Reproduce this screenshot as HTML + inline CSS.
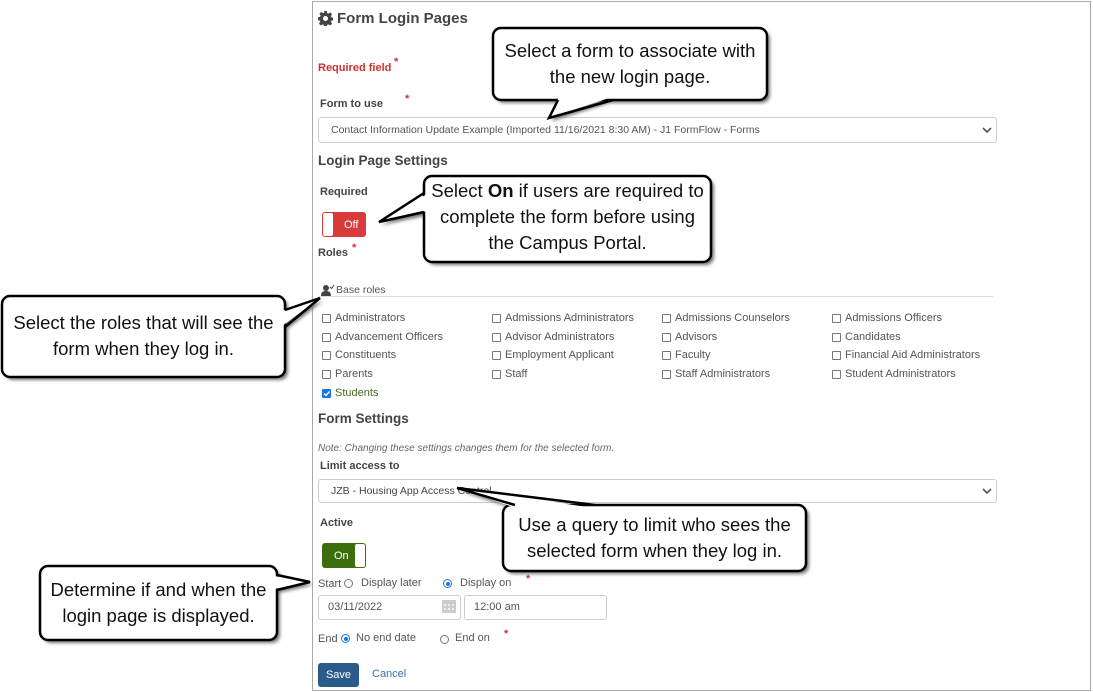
<!DOCTYPE html>
<html><head><meta charset="utf-8"><style>
*{margin:0;padding:0;box-sizing:border-box}
body{width:1093px;height:692px;background:#fff;position:relative;overflow:hidden;font-family:"Liberation Sans",sans-serif;color:#555}
.a{position:absolute;white-space:nowrap}
.lb{font-size:11px;font-weight:bold;color:#444}
.h{font-size:13.5px;font-weight:bold;color:#444}
.t{font-size:11px;color:#555}
.red{color:#d0312d}
.ast{color:#d0312d;font-size:11px;font-weight:bold}
.sel{position:absolute;border:1px solid #ccc;border-radius:3px;background:#fff}
.cb{position:absolute;width:9px;height:9px;border:1px solid #777;border-radius:1px;background:#fff}
.rd{position:absolute;width:9px;height:9px;border:1px solid #777;border-radius:50%;background:#fff}
.rd.on{border:1px solid #1a73e8}
.rd.on:after{content:"";position:absolute;left:1.5px;top:1.5px;width:4px;height:4px;border-radius:50%;background:#1a73e8}
.ct{position:absolute;font-size:18.5px;color:#111;text-align:center;line-height:26px}
</style></head><body>
<div class="a" style="left:312px;top:1px;width:779px;height:690px;border:1px solid #aaa"></div>

<svg class="a" style="left:318px;top:11px" width="15" height="15" viewBox="0 0 16 16"><path fill="#444" d="M6.6 0h2.8l.4 2.2 1.3.6 1.9-1.3 2 2-1.3 1.9.6 1.3 2.2.4v2.8l-2.2.4-.6 1.3 1.3 1.9-2 2-1.9-1.3-1.3.6-.4 2.2H6.6l-.4-2.2-1.3-.6-1.9 1.3-2-2 1.3-1.9-.6-1.3L0 9.4V6.6l2.2-.4.6-1.3L1.5 3l2-2 1.9 1.3 1.3-.6zM8 5.3a2.7 2.7 0 100 5.4 2.7 2.7 0 000-5.4z"/></svg>
<div class="a" style="left:337px;top:10px;font-size:15px;font-weight:bold;color:#444">Form Login Pages</div>

<div class="a lb red" style="left:318px;top:62px">Required field</div><div class="a ast" style="left:394px;top:56px">*</div>
<div class="a lb" style="left:320px;top:98px">Form to use</div><div class="a ast" style="left:405px;top:93px">*</div>
<div class="sel" style="left:318px;top:117px;width:679px;height:26px"></div>
<div class="a t" style="left:331px;top:124px;font-size:10.5px">Contact Information Update Example (Imported 11/16/2021 8:30 AM) - J1 FormFlow - Forms</div>
<svg class="a" style="left:982px;top:125px" width="10" height="10"><path d="M1 3l4 4 4-4" stroke="#555" stroke-width="1.6" fill="none"/></svg>

<div class="a h" style="left:318px;top:153px">Login Page Settings</div>
<div class="a lb" style="left:320px;top:186px">Required</div>
<div class="a" style="left:322px;top:212px;width:44px;height:25px;background:#d83b3b;border-radius:3px"></div>
<div class="a" style="left:323px;top:213px;width:10px;height:23px;background:#fff;border-radius:2px"></div>
<div class="a" style="left:344px;top:219px;font-size:11px;color:#fff">Off</div>
<div class="a lb" style="left:318px;top:247px">Roles</div><div class="a ast" style="left:352px;top:242px">*</div>

<svg class="a" style="left:321px;top:284px" width="14" height="12"><circle cx="5" cy="4" r="3" fill="#444"/><path d="M0 12c0-4 2-5 5-5s5 1 5 5z" fill="#444"/><path d="M9 3l1.5 1.5L13 1" stroke="#444" fill="none"/></svg>
<div class="a t" style="left:336px;top:284px;font-size:10.5px">Base roles</div>
<div class="a" style="left:318px;top:296px;width:675px;height:1px;background:#ddd"></div>

<div class="cb" style="left:322px;top:314px"></div><div class="a t" style="left:335px;top:312px">Administrators</div>
<div class="cb" style="left:492px;top:314px"></div><div class="a t" style="left:505px;top:312px">Admissions Administrators</div>
<div class="cb" style="left:662px;top:314px"></div><div class="a t" style="left:675px;top:312px">Admissions Counselors</div>
<div class="cb" style="left:832px;top:314px"></div><div class="a t" style="left:845px;top:312px">Admissions Officers</div>
<div class="cb" style="left:322px;top:333px"></div><div class="a t" style="left:335px;top:331px">Advancement Officers</div>
<div class="cb" style="left:492px;top:333px"></div><div class="a t" style="left:505px;top:331px">Advisor Administrators</div>
<div class="cb" style="left:662px;top:333px"></div><div class="a t" style="left:675px;top:331px">Advisors</div>
<div class="cb" style="left:832px;top:333px"></div><div class="a t" style="left:845px;top:331px">Candidates</div>
<div class="cb" style="left:322px;top:351px"></div><div class="a t" style="left:335px;top:349px">Constituents</div>
<div class="cb" style="left:492px;top:351px"></div><div class="a t" style="left:505px;top:349px">Employment Applicant</div>
<div class="cb" style="left:662px;top:351px"></div><div class="a t" style="left:675px;top:349px">Faculty</div>
<div class="cb" style="left:832px;top:351px"></div><div class="a t" style="left:845px;top:349px">Financial Aid Administrators</div>
<div class="cb" style="left:322px;top:370px"></div><div class="a t" style="left:335px;top:368px">Parents</div>
<div class="cb" style="left:492px;top:370px"></div><div class="a t" style="left:505px;top:368px">Staff</div>
<div class="cb" style="left:662px;top:370px"></div><div class="a t" style="left:675px;top:368px">Staff Administrators</div>
<div class="cb" style="left:832px;top:370px"></div><div class="a t" style="left:845px;top:368px">Student Administrators</div>
<div class="cb" style="left:322px;top:389px;background:#1a73e8;border-color:#1a73e8"></div>
<svg class="a" style="left:322px;top:389px" width="9" height="9"><path d="M2 4.5l2 2 3.5-4" stroke="#fff" stroke-width="1.4" fill="none"/></svg>
<div class="a t" style="left:335px;top:387px;color:#4a6a20">Students</div>

<div class="a h" style="left:318px;top:411px">Form Settings</div>
<div class="a" style="left:318px;top:443px;font-size:10px;font-style:italic;color:#666">Note: Changing these settings changes them for the selected form.</div>
<div class="a lb" style="left:320px;top:460px">Limit access to</div>
<div class="sel" style="left:318px;top:479px;width:679px;height:24px"></div>
<div class="a t" style="left:331px;top:485px;color:#444;font-size:10.5px">JZB - Housing App Access Control</div>
<svg class="a" style="left:982px;top:486px" width="10" height="10"><path d="M1 3l4 4 4-4" stroke="#555" stroke-width="1.6" fill="none"/></svg>

<div class="a lb" style="left:320px;top:517px">Active</div>
<div class="a" style="left:322px;top:543px;width:44px;height:25px;background:#3d6e0e;border-radius:3px"></div>
<div class="a" style="left:355px;top:544px;width:10px;height:23px;background:#fff;border-radius:2px"></div>
<div class="a" style="left:334px;top:550px;font-size:11px;color:#fff">On</div>

<div class="a t" style="left:318px;top:578px">Start</div>
<div class="rd" style="left:344px;top:579px"></div><div class="a t" style="left:361px;top:577px">Display later</div>
<div class="rd on" style="left:443px;top:579px"></div><div class="a t" style="left:460px;top:577px">Display on</div>
<div class="a ast" style="left:526px;top:573px">*</div>
<div class="sel" style="left:318px;top:595px;width:143px;height:25px"></div>
<div class="a t" style="left:328px;top:601px">03/11/2022</div>
<svg class="a" style="left:442px;top:599px" width="14" height="14"><rect x="0" y="1" width="14" height="13" fill="#ccc"/><g fill="#eee"><rect x="2" y="5" width="2" height="2"/><rect x="6" y="5" width="2" height="2"/><rect x="10" y="5" width="2" height="2"/><rect x="2" y="9" width="2" height="2"/><rect x="6" y="9" width="2" height="2"/><rect x="10" y="9" width="2" height="2"/></g></svg>
<div class="sel" style="left:464px;top:595px;width:143px;height:25px"></div>
<div class="a t" style="left:474px;top:601px">12:00 am</div>

<div class="a t" style="left:318px;top:633px">End</div>
<div class="rd on" style="left:341px;top:634px"></div><div class="a t" style="left:356px;top:632px">No end date</div>
<div class="rd" style="left:440px;top:635px"></div><div class="a t" style="left:455px;top:632px">End on</div>
<div class="a ast" style="left:504px;top:628px">*</div>

<div class="a" style="left:318px;top:663px;width:41px;height:24px;background:#2b5b8b;border-radius:3px;color:#fff;font-size:11px;text-align:center;line-height:24px">Save</div>
<div class="a" style="left:372px;top:668px;font-size:11px;color:#3a6fa6">Cancel</div>

<svg class="a" style="left:0;top:0" width="1093" height="692">
<defs><filter id="b"><feGaussianBlur stdDeviation="1.5"/></filter></defs>
<g fill="#777" filter="url(#b)" transform="translate(3,3)">
<rect x="493" y="28" width="274" height="72" rx="8"/><polygon points="558,98 613,98 549,118"/>
<rect x="424" y="176" width="287" height="86" rx="8"/><polygon points="426,193 426,212 379,222"/>
<rect x="2" y="296" width="283" height="81" rx="8"/><polygon points="283,310 283,327 320,298"/>
<rect x="503" y="505" width="303" height="66" rx="8"/><polygon points="515,507 595,507 457,488"/>
<rect x="40" y="566" width="237" height="74" rx="8"/><polygon points="275,575 275,590 310,582"/>
</g>
<g fill="#fff" stroke="#000" stroke-width="2.5">
<rect x="493" y="28" width="274" height="72" rx="8"/>
<rect x="424" y="176" width="287" height="86" rx="8"/>
<rect x="2" y="296" width="283" height="81" rx="8"/>
<rect x="503" y="505" width="303" height="66" rx="8"/>
<rect x="40" y="566" width="237" height="74" rx="8"/>
</g>
<g fill="#fff">
<polygon points="559,97 612,97 549,118"/>
<polygon points="427,194 427,211 379,222"/>
<polygon points="282,311 282,326 320,298"/>
<polygon points="516,508 594,508 457,488"/>
<polygon points="274,576 274,589 310,582"/>
</g>
<g fill="none" stroke="#000" stroke-width="2.5" stroke-linejoin="miter">
<polyline points="558,100 549,118 613,100"/>
<polyline points="424,193 379,222 424,212"/>
<polyline points="285,310 320,298 285,327"/>
<polyline points="515,505 457,488 595,505"/>
<polyline points="277,575 310,582 277,590"/>
</g>
</svg>

<div class="ct" style="left:493px;top:38px;width:274px">Select a form to associate with<br>the new login page.</div>
<div class="ct" style="left:424px;top:178px;width:287px">Select <b>On</b> if users are required to<br>complete the form before using<br>the Campus Portal.</div>
<div class="ct" style="left:2px;top:310px;width:283px">Select the roles that will see the<br>form when they log in.</div>
<div class="ct" style="left:503px;top:512px;width:303px">Use a query to limit who sees the<br>selected form when they log in.</div>
<div class="ct" style="left:40px;top:577px;width:237px">Determine if and when the<br>login page is displayed.</div>
</body></html>
